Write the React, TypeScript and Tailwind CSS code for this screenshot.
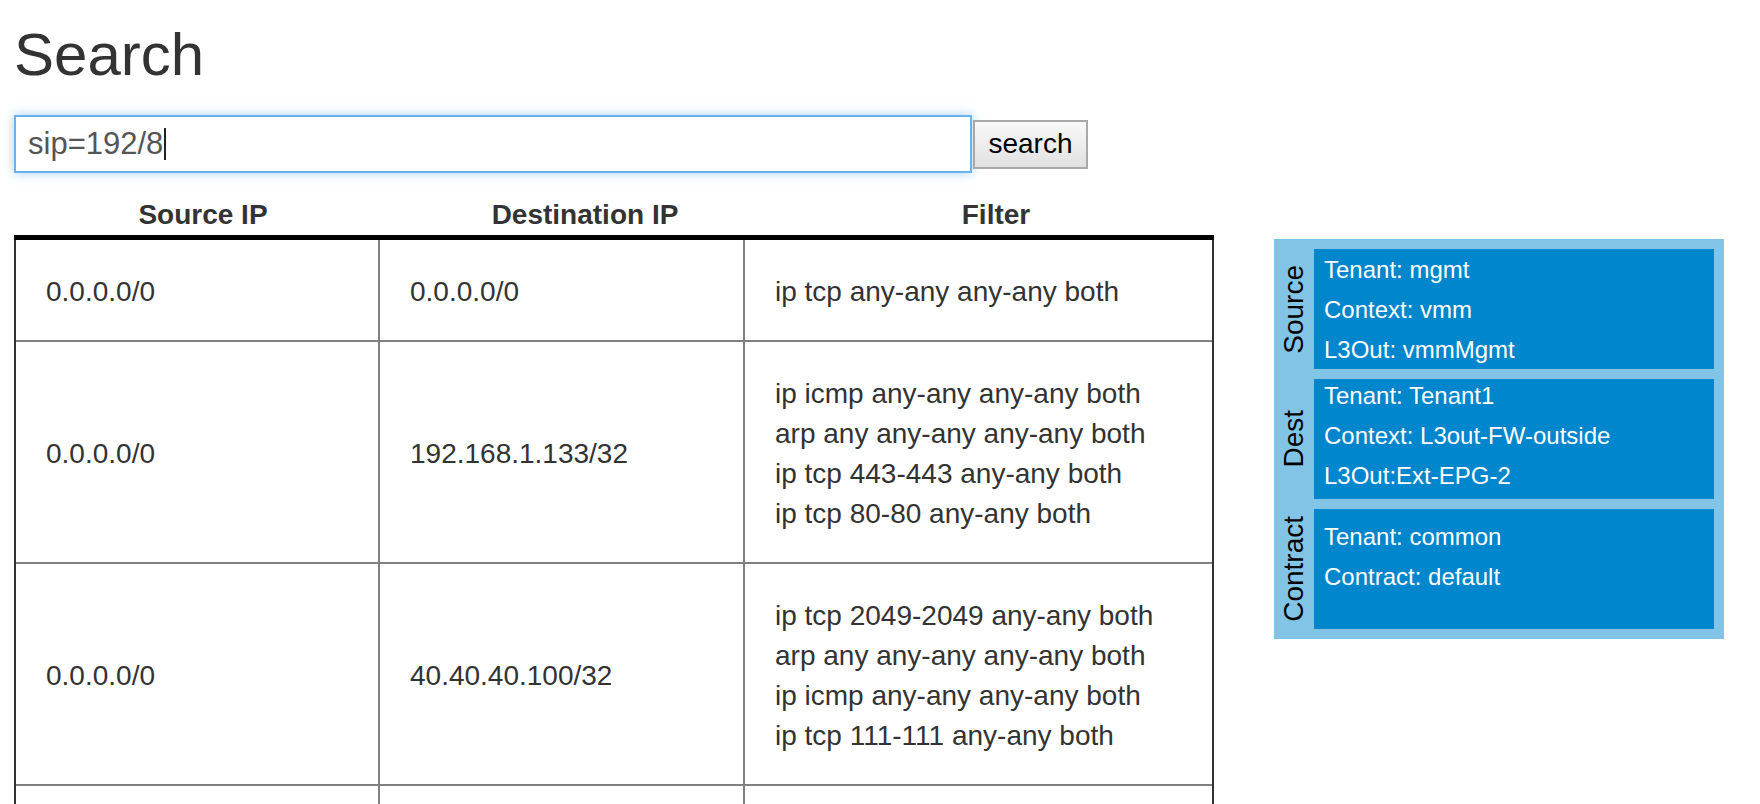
import React from "react";

const rows = [
  { src: "0.0.0.0/0", dst: "0.0.0.0/0", filters: ["ip tcp any-any any-any both"] },
  {
    src: "0.0.0.0/0",
    dst: "192.168.1.133/32",
    filters: [
      "ip icmp any-any any-any both",
      "arp any any-any any-any both",
      "ip tcp 443-443 any-any both",
      "ip tcp 80-80 any-any both",
    ],
  },
  {
    src: "0.0.0.0/0",
    dst: "40.40.40.100/32",
    filters: [
      "ip tcp 2049-2049 any-any both",
      "arp any any-any any-any both",
      "ip icmp any-any any-any both",
      "ip tcp 111-111 any-any both",
    ],
  },
];

const groups = [
  { label: "Source", lines: ["Tenant: mgmt", "Context: vmm", "L3Out: vmmMgmt"], extra: "pt-[1px]" },
  { label: "Dest", lines: ["Tenant: Tenant1", "Context: L3out-FW-outside", "L3Out:Ext-EPG-2"], extra: "-mt-[3px]" },
  { label: "Contract", lines: ["Tenant: common", "Contract: default"], extra: "pt-[8px]" },
];

export default function App() {
  return (
    <div
      className="min-h-screen bg-white pl-[14px] pt-[22px] text-[#333]"
      style={{ fontFamily: '"Liberation Sans", Arial, Helvetica, sans-serif' }}
    >
      <h2 className="text-[60px] font-normal leading-[66px] text-[#333]">Search</h2>

      <div className="mt-[27px] flex items-center">
        <div className="flex h-[58px] w-[958px] items-center border-2 border-[#6cb2ea] bg-white pl-[12px] text-[31px] text-[#555] shadow-[0_0_10px_rgba(102,175,233,0.6)]">
          <span>sip=192/8</span>
          <span className="ml-[1px] inline-block h-[32px] w-[2px] bg-[#222]" />
        </div>
        <button className="ml-[1px] h-[49px] w-[115px] border-2 border-[#a9a9a9] bg-linear-to-b from-[#f9f9f9] to-[#e1e1e1] text-[28px] leading-[40px] text-black">
          search
        </button>
      </div>

      <div className="mt-[22px] flex items-start">
        <div className="w-[1200px] shrink-0">
          <div className="grid grid-cols-[378px_386px_436px] border-b-[5px] border-black text-[28px] font-bold leading-[40px] text-[#333]">
            <div className="text-center">Source IP</div>
            <div className="text-center">Destination IP</div>
            <div className="text-center">Filter</div>
          </div>
          <div className="border-x-2 border-[#333]">
            {rows.map((r, i) => (
              <div
                key={i}
                className="grid grid-cols-[364px_365px_1fr] border-b-2 border-[#808080] text-[28px] leading-[40px] text-[#333]"
              >
                <div className="flex items-center border-r-2 border-[#808080] px-[30px] pt-[32px] pb-[28px]">{r.src}</div>
                <div className="flex items-center border-r-2 border-[#808080] px-[30px] pt-[32px] pb-[28px]">{r.dst}</div>
                <div className="flex flex-col justify-center px-[30px] pt-[32px] pb-[28px]">
                  {r.filters.map((f) => (
                    <div key={f}>{f}</div>
                  ))}
                </div>
              </div>
            ))}
            <div className="grid grid-cols-[364px_365px_1fr] border-b-2 border-[#808080] text-[28px] leading-[40px] text-[#333]">
              <div className="border-r-2 border-[#808080] p-[30px]">&nbsp;</div>
              <div className="border-r-2 border-[#808080] p-[30px]">&nbsp;</div>
              <div className="p-[30px]">&nbsp;</div>
            </div>
          </div>
        </div>

        <div className="ml-[60px] mt-[44px] flex w-[450px] flex-col gap-[10px] bg-[#82c4e6] py-[10px] pr-[10px]">
          {groups.map((g) => (
            <div key={g.label} className="flex">
              <div className="flex w-[40px] items-center justify-center">
                <span className="rotate-180 text-[28px] leading-[40px] text-black [writing-mode:vertical-rl]">
                  {g.label}
                </span>
              </div>
              <div className="h-[120px] flex-1 bg-[#0086cc] pl-[10px] text-[24px] leading-[40px] text-white">
                <div className={g.extra}>
                  {g.lines.map((l) => (
                    <div key={l}>{l}</div>
                  ))}
                </div>
              </div>
            </div>
          ))}
        </div>
      </div>
    </div>
  );
}
